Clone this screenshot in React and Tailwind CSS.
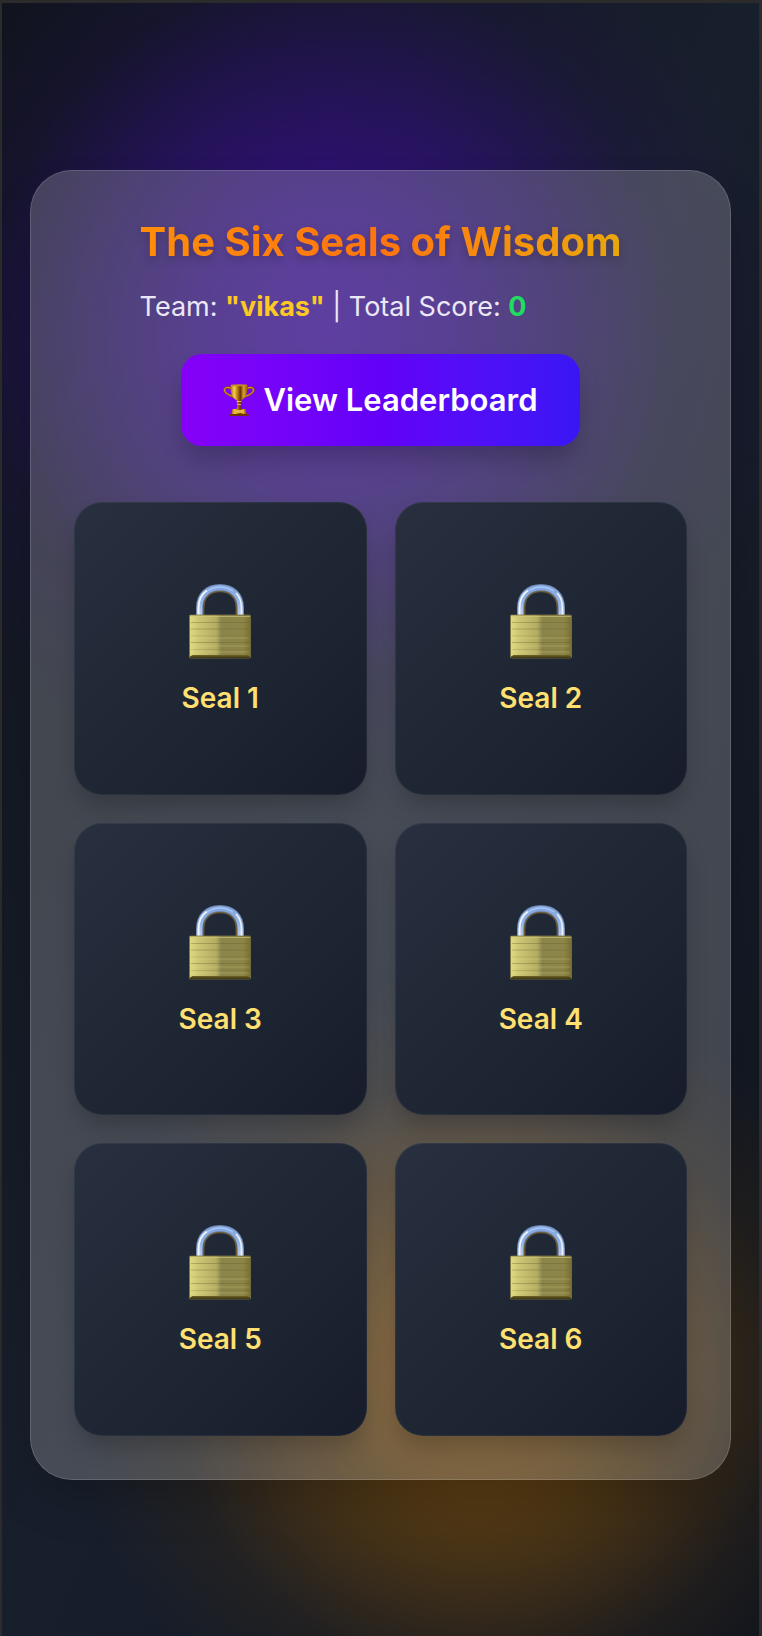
const seals = [1, 2, 3, 4, 5, 6];

function LockIcon() {
  return (
    <svg viewBox="0 0 64 76" className="mt-[5px] mb-[19px] h-[76px] w-16" aria-hidden="true">
      <defs>
        <linearGradient id="brass" x1="0" x2="1" y1="0" y2="0">
          <stop offset="0" stopColor="#e0db83" />
          <stop offset="0.14" stopColor="#cdc774" />
          <stop offset="0.44" stopColor="#b3ab62" />
          <stop offset="0.52" stopColor="#8b854b" />
          <stop offset="0.88" stopColor="#8d8548" />
          <stop offset="1" stopColor="#7a6d32" />
        </linearGradient>
        <linearGradient id="steel" x1="0" x2="0" y1="0" y2="1">
          <stop offset="0" stopColor="#83a5da" />
          <stop offset="0.5" stopColor="#93b4e8" />
          <stop offset="1" stopColor="#bccbe8" />
        </linearGradient>
        <linearGradient id="base" x1="0" x2="0" y1="0" y2="1">
          <stop offset="0" stopColor="#6f6527" />
          <stop offset="1" stopColor="#3d330f" />
        </linearGradient>
      </defs>
      <path d="M15.400 33V25C15.400 14 22 8.200 32 8.200S48.600 14 48.600 25V33" fill="none" stroke="#6d5a34" strokeWidth="2" />
      <path d="M11.500 33V25C11.500 12 20 4.500 32 4.500S52.500 12 52.500 25V33" fill="none" stroke="#66789a" strokeWidth="7" />
      <path d="M11.500 33V25C11.500 12 20 4.500 32 4.500S52.500 12 52.500 25V33" fill="none" stroke="url(#steel)" strokeWidth="5.600" />
      <path d="M10.600 33V25C10.600 17 13.500 11 19 7.500" fill="none" stroke="#f3f6fd" strokeWidth="1.800" />
      <path d="M53.400 33V25C53.400 18 51.500 13.500 48 10" fill="none" stroke="#eef1f8" strokeWidth="1.600" />
      <path d="M19 8C27 2.500 37 2.500 45 8" fill="none" stroke="#a9c7fa" strokeWidth="1.500" />
      <rect x="1.500" y="32" width="61" height="43" rx="1" fill="url(#brass)" stroke="#7b7441" strokeWidth="0.800" />
      <path d="M2 33.500H62" stroke="#d3cc80" strokeWidth="1.200" opacity="0.600" />
      <path d="M3 39.500H61M3 46H61M3 59.500H61" stroke="#665e2b" strokeWidth="1" opacity="0.350" />
      <path d="M3 53H61M3 66.500H61" stroke="#665e2b" strokeWidth="0.900" opacity="0.200" />
      <path d="M3 55H61M3 63H61M3 69H61" stroke="#ede690" strokeWidth="0.900" opacity="0.250" />
      <path d="M2 75V73.500L4.500 72H59.500L62 73.500V75Z" fill="url(#base)" />
    </svg>
  );
}

function TrophyIcon() {
  return (
    <svg viewBox="0 0 32 32" className="h-8 w-8" aria-hidden="true">
      <defs>
        <linearGradient id="gold" x1="0" x2="1" y1="0" y2="0">
          <stop offset="0" stopColor="#a4650c" />
          <stop offset="0.22" stopColor="#f5cf52" />
          <stop offset="0.42" stopColor="#b97815" />
          <stop offset="0.58" stopColor="#673500" />
          <stop offset="0.78" stopColor="#dda32b" />
          <stop offset="1" stopColor="#8a4d07" />
        </linearGradient>
      </defs>
      <path d="M9 5C5 2.500 1 3.500 1.300 6.500C1.600 9.500 5 11 10.500 13M23 5C27 2.500 31 3.500 30.700 6.500C30.400 9.500 27 11 21.500 13" fill="none" stroke="#8c5009" strokeWidth="2.200" />
      <path d="M9 4.800C5 2.500 1.500 3.500 1.600 6C1.900 9 5 10.500 10.500 12.500M23 4.800C27 2.500 30.500 3.500 30.400 6C30.100 9 27 10.500 21.500 12.500" fill="none" stroke="#e0a638" strokeWidth="1" />
      <path d="M7.500 1H24.500C25 9 22.500 14.500 18 16.500V19L17.200 21L18.500 25H13.500L14.800 21L14 19V16.500C9.500 14.500 7 9 7.500 1Z" fill="url(#gold)" />
      <ellipse cx="16" cy="1.300" rx="8.500" ry="1" fill="#c58c27" />
      <path d="M13.500 17.500H18.500M14 20.500H18" stroke="#f0bd48" strokeWidth="0.900" />
      <path d="M9.500 25H22.500L23.500 30H8.500Z" fill="url(#gold)" />
      <rect x="11" y="26" width="10" height="3" fill="#e9b63f" />
      <path d="M6.500 30H25.500V32H6.500Z" fill="#713407" />
    </svg>
  );
}

export default function App() {
  return (
    <div className="min-h-screen border-t-3 border-r-3 border-l-2 border-[#2b2b2b] bg-[#111620] font-['Inter','Liberation_Sans',sans-serif]">
      <main className="flex min-h-[calc(100vh-3px)] flex-col items-center bg-[radial-gradient(ellipse_460px_470px_at_43%_20%,#380f90f2,#340f87d9_25%,#2d1071a6_50%,#220f5640_75%,transparent),radial-gradient(ellipse_410px_400px_at_63%_84%,#69450f,#634110e6_25%,#583b11a6_50%,#3e2d154d_75%,transparent),linear-gradient(to_bottom_right,#10141c,#181f2c,#10141e)] px-7 pt-[167px] pb-[157px]">
        <section className="w-full rounded-[42px] border border-white/15 bg-white/20 p-[43px] shadow-2xl">
          <header className="flex flex-col items-center">
            <div>
              <h1 className="bg-linear-to-r from-[#ff8d08] via-[#ff7410] to-[#e9a60c] bg-clip-text text-[40px] leading-14 font-bold text-transparent drop-shadow-[0_4px_4px_rgba(0,0,0,0.2)]">
                The Six Seals of Wisdom
              </h1>
              <p className="mt-[17px] text-[27px] leading-10 text-[#ebe8f5]">
                Team: <span className="font-bold text-[#fdc823]">"vikas"</span> | Total Score:{" "}
                <span className="font-bold text-[#1fdc60]">0</span>
              </p>
            </div>
            <button className="mt-[27px] flex h-[92px] items-center gap-2 rounded-[21px] bg-linear-to-r from-[#8600f8] via-[#6300f8] to-[#3a16f5] px-[42px] text-[31px] font-semibold text-white shadow-[0_16px_24px_-4px_rgba(0,0,0,0.22)]">
              <TrophyIcon />
              View Leaderboard
            </button>
          </header>
          <div className="mt-14 grid grid-cols-2 gap-7">
            {seals.map((n) => (
              <button
                key={n}
                className="flex aspect-square flex-col items-center justify-center rounded-[28px] border border-white/5 bg-linear-to-br from-[#28303f] via-[#1f2735] to-[#171c2a] bg-origin-border shadow-[0_14px_24px_-4px_rgba(0,0,0,0.22)]"
              >
                <LockIcon />
                <span className="text-[28px] leading-10 font-semibold text-[#ffe070]">Seal {n}</span>
              </button>
            ))}
          </div>
        </section>
      </main>
    </div>
  );
}
